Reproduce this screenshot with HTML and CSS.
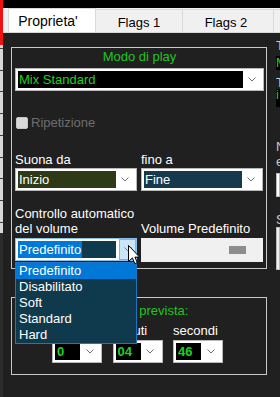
FILE: index.html
```html
<!DOCTYPE html>
<html lang="it">
<head>
<meta charset="utf-8">
<title>Proprieta'</title>
<link rel="stylesheet" href="styles.css">
</head>
<body>
<div class="screen">
  <div class="edge">
    <div class="edge-red"></div>
    <div class="edge-list"></div>
    <div class="edge-dark"></div>
  </div>
  <div class="win">
    <div class="topbar"></div>
    <div class="tabrow">
      <div class="tab active">Proprieta'</div>
      <div class="tab t-f1">Flags 1</div>
      <div class="tab t-f2">Flags 2</div>
      <div class="tab t-f3"></div>
    </div>
    <div class="page">
      <div class="main">
        <section class="group g1">
          <div class="gtitle">Modo di play</div>
          <div class="combo c-mix">
            <div class="field f-black green">Mix Standard</div>
            <span class="chev"><svg width="8" height="5" viewBox="0 0 8 5"><path d="M0.5 0.5 L4 4 L7.5 0.5" fill="none" stroke="#707070" stroke-width="1"/></svg></span>
          </div>
          <div class="check"><span class="box"></span><span class="check-lbl">Ripetizione</span></div>
          <div class="pair">
            <div class="col">
              <div class="lbl">Suona da</div>
              <div class="combo">
                <div class="field f-olive">Inizio</div>
                <span class="chev"><svg width="8" height="5" viewBox="0 0 8 5"><path d="M0.5 0.5 L4 4 L7.5 0.5" fill="none" stroke="#707070" stroke-width="1"/></svg></span>
              </div>
            </div>
            <div class="col">
              <div class="lbl">fino a</div>
              <div class="combo">
                <div class="field f-teal">Fine</div>
                <span class="chev"><svg width="8" height="5" viewBox="0 0 8 5"><path d="M0.5 0.5 L4 4 L7.5 0.5" fill="none" stroke="#707070" stroke-width="1"/></svg></span>
              </div>
            </div>
          </div>
          <div class="pair pair2">
            <div class="col">
              <div class="lbl">Controllo automatico<br>del volume</div>
              <div class="combo focus">
                <div class="field f-vol"><span class="sel">Predefinito</span></div>
                <span class="dd-btn"><svg width="8" height="5" viewBox="0 0 8 5"><path d="M0.5 0.5 L4 4 L7.5 0.5" fill="none" stroke="#6a7f93" stroke-width="1"/></svg></span>
                <ul class="dropdown">
                  <li class="hi">Predefinito</li>
                  <li>Disabilitato</li>
                  <li>Soft</li>
                  <li>Standard</li>
                  <li>Hard</li>
                </ul>
                <svg class="cursor" width="13" height="20" viewBox="0 0 13 20"><path d="M0.5 0.5 V16.5 L4.4 12.9 L6.9 18.6 L9.3 17.6 L6.9 12.1 H11.6 Z" fill="#ffffff" stroke="#000000" stroke-width="1" stroke-linejoin="round"/></svg>
              </div>
            </div>
            <div class="col col-vol">
              <div class="lbl">Volume Predefinito</div>
              <div class="slider"><span class="thumb"></span></div>
            </div>
          </div>
        </section>
        <section class="group g2">
          <div class="gtitle g2title">Durata prevista:</div>
          <div class="times">
            <div class="tcol">
              <div class="lbl">ore</div>
              <div class="combo tcombo">
                <div class="field f-black green bold">0</div>
                <span class="chev"><svg width="8" height="5" viewBox="0 0 8 5"><path d="M0.5 0.5 L4 4 L7.5 0.5" fill="none" stroke="#707070" stroke-width="1"/></svg></span>
              </div>
            </div>
            <div class="tcol">
              <div class="lbl">minuti</div>
              <div class="combo tcombo">
                <div class="field f-black green bold">04</div>
                <span class="chev"><svg width="8" height="5" viewBox="0 0 8 5"><path d="M0.5 0.5 L4 4 L7.5 0.5" fill="none" stroke="#707070" stroke-width="1"/></svg></span>
              </div>
            </div>
            <div class="tcol">
              <div class="lbl">secondi</div>
              <div class="combo tcombo">
                <div class="field f-black green bold">46</div>
                <span class="chev"><svg width="8" height="5" viewBox="0 0 8 5"><path d="M0.5 0.5 L4 4 L7.5 0.5" fill="none" stroke="#707070" stroke-width="1"/></svg></span>
              </div>
            </div>
          </div>
        </section>
      </div>
      <div class="side">
        <div class="s-lbl">T</div>
        <div class="s-box green">M</div>
        <div class="s-lbl s2">T</div>
        <div class="s-box s-box2 green">i</div>
        <div class="s-lbl s3">N<br>e</div>
        <div class="s-combo"></div>
        <div class="s-lbl s4">S</div>
        <div class="s-area"></div>
      </div>
    </div>
  </div>
</div>
</body>
</html>
```
FILE: styles.css
```css
* { box-sizing: border-box; }
html, body { margin: 0; padding: 0; }
body {
  width: 280px;
  height: 397px;
  overflow: hidden;
  background: #202020;
  font-family: "Liberation Sans", Arial, sans-serif;
  font-size: 13px;
  line-height: 15px;
  color: #ffffff;
}
.screen { display: flex; width: 280px; height: 397px; overflow: hidden; }

.edge { width: 3px; display: flex; flex-direction: column; flex: none; }
.edge-red { height: 45px; background: #f01010; }
.edge-list {
  height: 188px;
  background: repeating-linear-gradient(#d8d8d8 0px, #d8d8d8 3px, #3c3c3c 3px, #3c3c3c 4px, #d8d8d8 4px, #d8d8d8 21.7px);
}
.edge-dark { flex: 1; background: #2c2c2c; }

.win { flex: 1; display: flex; flex-direction: column; min-width: 0; overflow: hidden; }
.topbar { height: 8px; background: #000000; flex: none; }
.tabrow {
  height: 25px;
  flex: none;
  display: flex;
  background: #f0f0f0;
  padding-left: 5px;
  border-bottom: 1px solid #d9d9d9;
  color: #000000;
  font-size: 13px;
  overflow: hidden;
}
.tab {
  flex: none;
  display: flex;
  align-items: center;
  justify-content: center;
  background: #f0f0f0;
  border: 1px solid #d9d9d9;
  border-bottom: none;
  margin-top: 1px;
  padding-top: 2px;
}
.tab.active {
  width: 88px;
  background: #ffffff;
  margin-top: 0;
  margin-bottom: -1px;
  padding-top: 0;
  padding-right: 8px;
  font-size: 14px;
}
.t-f1 { width: 87px; border-left: none; }
.t-f2 { width: 91px; border-left: none; padding-right: 4px; }
.t-f3 { width: 20px; border-left: none; }

.page {
  flex: 1;
  display: flex;
  gap: 9px;
  padding: 14px 0 0 8px;
  background: #202020;
  overflow: hidden;
}
.main { width: 256px; flex: none; display: flex; flex-direction: column; }

.group { border: 1px solid #c9c9c9; display: flex; flex-direction: column; position: relative; }
.g1 { height: 222px; padding: 1px 2px 0 3px; z-index: 2; }
.g2 { height: 78px; margin-top: 28px; padding: 5px 2px 0 3px; z-index: 1; }
.gtitle { color: #22c422; text-align: center; height: 15px; }
.g2title { padding-left: 6px; }

.green { color: #1fd01f; }
.bold { font-weight: bold; }

.combo {
  display: flex;
  height: 23px;
  border: 1px solid #b9b9b9;
  background: #ffffff;
  padding: 2px 0 2px 2px;
  position: relative;
}
.c-mix { margin-top: 4px; }
.field {
  flex: 1;
  min-width: 0;
  height: 17px;
  line-height: 17px;
  padding-left: 1px;
  white-space: nowrap;
  overflow: hidden;
  color: #ffffff;
}
.f-black { background: #000000; color: #1fd01f; }
.f-olive { background: #2e3a17; }
.f-teal { background: #163a4b; }
.f-vol { background: #0f3a4d; padding-left: 0; }
.chev { width: 20px; flex: none; display: flex; align-items: center; justify-content: center; padding-right: 2px; }

.check { display: flex; align-items: center; margin-top: 24px; height: 15px; color: #6e6e6e; }
.box {
  width: 12px;
  height: 12px;
  margin-left: 1px;
  margin-right: 3px;
  background: #d9d9d9;
  border: 1px solid #c6c6c6;
  border-radius: 2px;
}

.pair { display: grid; grid-template-columns: 122px 122px; column-gap: 4px; margin-top: 22px; }
.pair .lbl { margin-bottom: 1px; }
.pair2 { margin-top: 15px; align-items: start; }
.pair2 .lbl { margin-bottom: 2px; }
.col { display: flex; flex-direction: column; }
.col-vol { padding-top: 15px; }

.combo.focus { border-color: #8cbfea; padding-right: 0; }
.sel { display: inline-block; height: 17px; padding: 0 1px; background: #0078d7; color: #ffffff; }
.dd-btn {
  width: 17px;
  flex: none;
  margin: -2px 0 -2px 3px;
  background: #cce4f7;
  border: 1px solid #7eb4ea;
  display: flex;
  align-items: center;
  justify-content: center;
}
.dropdown {
  position: absolute;
  left: -1px;
  top: 23px;
  width: 122px;
  margin: 0;
  padding: 0;
  list-style: none;
  background: #0f3a4e;
  border: 1px solid #1f74c4;
  z-index: 5;
}
.dropdown li { height: 16px; line-height: 16px; padding-left: 3px; color: #ffffff; }
.dropdown li.hi { background: #0078d7; }
.cursor { position: absolute; left: 112px; top: 6px; z-index: 6; }

.slider {
  height: 24px;
  background: #f0f0f0;
  display: flex;
  align-items: center;
  justify-content: flex-end;
  padding-right: 17px;
}
.thumb { width: 17px; height: 8px; background: #8d8d8d; }

.times {
  display: grid;
  grid-template-columns: 50px 50px 50px;
  column-gap: 10.5px;
  margin-top: 5px;
  padding-left: 37px;
}
.tcol { display: flex; flex-direction: column; }
.tcol .lbl { margin-bottom: 2px; }
.tcombo .field { padding-left: 2px; }
.tcombo .chev { width: 21px; }

.side { flex: none; width: 4px; overflow: hidden; margin-top: -9px; display: flex; flex-direction: column; color: #c4ccd8; }
.s-lbl { height: 15px; white-space: nowrap; }
.s-box { height: 14px; margin-top: 3px; background: #000000; line-height: 14px; }
.s2 { margin-top: 7px; height: 12px; line-height: 12px; overflow: hidden; }
.s-box2 { height: 18px; margin-top: 0; line-height: 12px; }
.s3 { margin-top: 32px; height: 30px; }
.s-combo { height: 24px; margin-top: 4px; border: 1px solid #b9b9b9; background: #ffffff; }
.s4 { margin-top: 15px; }
.s-area { height: 43px; border: 1px solid #b9b9b9; background: #f0f0f0; }
```
